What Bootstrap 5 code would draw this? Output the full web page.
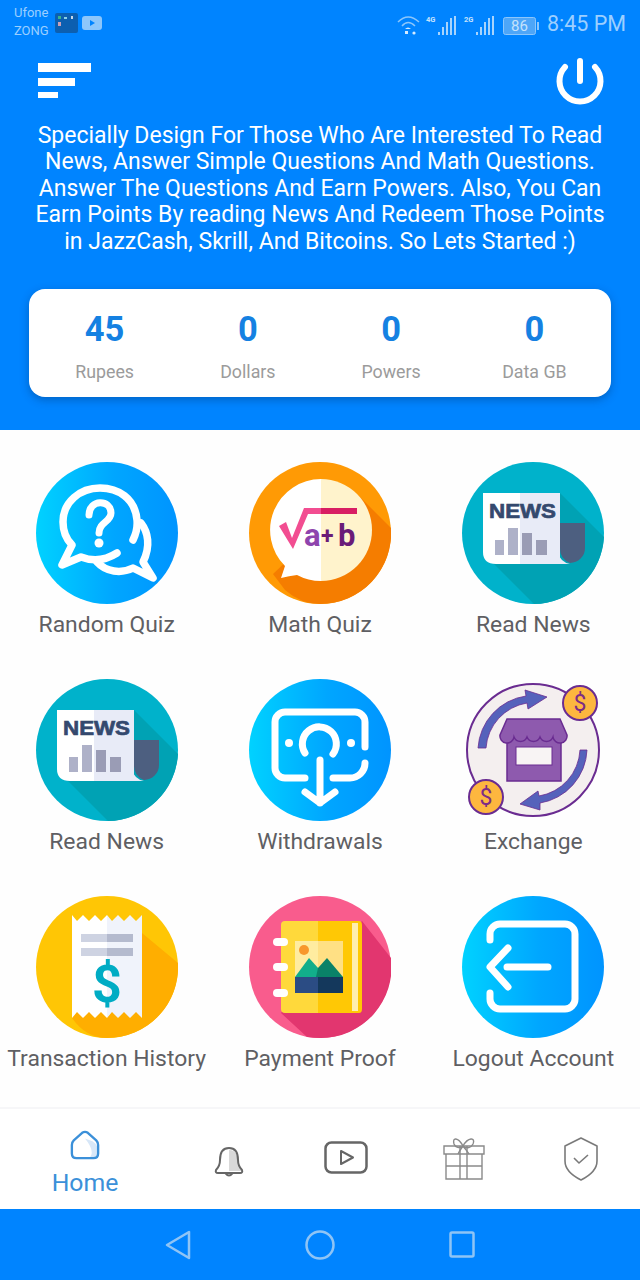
<!DOCTYPE html>
<html>

<head>
  <title>Earning App Home</title>
  <link href="https://cdn.jsdelivr.net/npm/bootstrap@5.3.2/dist/css/bootstrap.min.css" rel="stylesheet">
  <script src="https://cdn.jsdelivr.net/npm/bootstrap@5.3.2/dist/js/bootstrap.bundle.min.js"></script>
  <style>
    body { font-family: Roboto, "Liberation Sans", sans-serif; background: #fefefe; }
    .app-page { width: 640px; height: 1280px; overflow: hidden; }
    .app-head { background: #0084ff; height: 430px; }
    .status-row { height: 44px; padding: 4px 15px 0 14px; color: #9ccfff; }
    .carrier { font-size: 13px; line-height: 18px; width: 41px; }
    .clock { font-size: 21.5px; line-height: 26px; width: 78px; margin-left: 7px; white-space: nowrap; }
    .tool-row { height: 62px; padding: 0 36px 1px 38px; }
    .intro { font-size: 23px; line-height: 26.6px; margin: 16.5px 0 33.5px; color: #fff; }
    .stat-card { margin: 0 29px; height: 108px; background: #fff; border-radius: 16px; box-shadow: 0 3px 8px rgba(0, 40, 90, .35); padding: 0 5px 0 4px; }
    .stat-num { font-size: 34.5px; font-weight: 700; line-height: 40px; color: #1581e2; padding-top: 20px; }
    .stat-name { font-size: 17.8px; line-height: 20px; color: #9b9b9b; margin-top: 13px; }
    .tile-grid { padding-top: 32px; row-gap: 37px; }
    .tile-label { font-size: 22.9px; line-height: 34px; color: #5f5f63; margin-top: 4px; white-space: nowrap; }
    .tab-bar { height: 102px; border-top: 2px solid #f6f6f8; background: #fff; display: grid; grid-template-columns: 170px repeat(4, 117.5px); }
    .home-tab { padding-top: 21px; }
    .bell-icon { margin-top: 13px; }
    .home-label { font-size: 24.8px; line-height: 28px; color: #3b90d9; margin-top: 9px; }
    .nav-keys { height: 71px; background: #0084ff; padding-left: 165px; gap: 114px; }
  </style>
</head>

<body>
  <svg width="0" height="0" class="position-absolute">
    <defs>
      <linearGradient id="skyFill" x1="0" x2="1" y1="0" y2="0">
        <stop offset="0" stop-color="#00d2ff"/>
        <stop offset=".55" stop-color="#00a6ff"/>
        <stop offset="1" stop-color="#0094ff"/>
      </linearGradient>
      <symbol id="newsIcon" viewBox="0 0 142 142">
        <circle cx="71" cy="71" r="71" fill="#00b2cb"/>
        <path d="M98 31 L142 75 A71 71 0 0 1 72 142 L26 96 Z" fill="#00a2b4"/>
        <path d="M21 31 H58 V102 H34 Q21 102 21 90 Z" fill="#fff"/>
        <path d="M58 31 H98 V102 H58 Z" fill="#e8ebf7"/>
        <path d="M98 61 H123 V86 A15 15 0 0 1 108 101 A15 15 0 0 1 98 86 Z" fill="#4d5f80"/>
        <path d="M96 90 Q98 100 108 102 H90 V90 Z" fill="#e8ebf7"/>
        <text x="27" y="56" font-family="Liberation Sans" font-weight="700" font-size="21" textLength="67" lengthAdjust="spacingAndGlyphs" fill="#34496e" stroke="#34496e" stroke-width=".7">NEWS</text>
        <path d="M33 78 H42 V93 H33 Z M46 66 H56 V93 H46 Z" fill="#aeb1c8"/>
        <path d="M60 71 H70 V93 H60 Z M74 78 H85 V93 H74 Z" fill="#9a9cb5"/>
      </symbol>
    </defs>
  </svg>

  <div class="app-page d-flex flex-column">
    <header class="app-head">
      <div class="status-row d-flex align-items-center">
        <div class="carrier align-self-start">Ufone<br>ZONG</div>
        <svg width="50" height="30" viewBox="0 0 50 30" class="align-self-start mt-1">
          <rect x="0" y="5" width="23" height="20" rx="2" fill="#0c5fb0"/>
          <rect x="3" y="8" width="3" height="3" fill="#38b58c"/><rect x="9" y="9" width="3" height="2" fill="#8ad0e8"/><rect x="16" y="8" width="2" height="3" fill="#c6d8ea"/><rect x="3" y="14" width="3" height="4" fill="#c9a0b8"/>
          <rect x="27" y="8" width="20" height="14" rx="3" fill="#8cc6fb"/><path d="M35 12 L40 15 L35 18 Z" fill="#0084ff"/>
        </svg>
        <div class="flex-grow-1"></div>
        <svg width="140" height="22" viewBox="0 0 140 22" class="flex-shrink-0">
          <g fill="none" stroke="#8cc6fb" stroke-width="1.5"><path d="M1 9 Q11 -1 22 9"/><path d="M5 13 Q11 6 18 13"/></g>
          <path d="M8 16 Q11 13 14 16 Z M8 18 h3 v3 h-3 Z" fill="#d5ebff"/><circle cx="17" cy="20" r="1.6" fill="#d5ebff"/>
          <text x="29" y="9" font-size="7.5" font-weight="700" fill="#c6e2fc" font-family="Roboto">4G</text>
          <path d="M41 19h2v3h-2z M45 14h2v8h-2z M49 9h2v13h-2z M53 5h2v17h-2z M57 3h2v19h-2z" fill="#a8d4fc"/>
          <text x="67" y="9" font-size="7.5" font-weight="700" fill="#c6e2fc" font-family="Roboto">2G</text>
          <path d="M79 19h2v3h-2z M83 14h2v8h-2z M87 9h2v13h-2z M91 5h2v17h-2z M95 3h2v19h-2z" fill="#a8d4fc"/>
          <rect x="106.500" y="4.500" width="32" height="17" rx="2" fill="#4ea6f8" stroke="#8cc6fb"/>
          <text x="114" y="18" font-size="15" fill="#c4e2fc" font-family="Roboto">86</text>
        </svg>
        <svg width="3" height="22" viewBox="0 0 3 22" class="flex-shrink-0"><rect x="0" y="9" width="2" height="8" fill="#8cc6fb"/></svg>
        <div class="clock">8:45 PM</div>
      </div>

      <div class="tool-row d-flex justify-content-between align-items-end">
        <svg width="53" height="38" viewBox="0 0 53 38" class="align-self-start mt-3">
          <rect x="0" y="3" width="53" height="9" fill="#fff"/><rect x="0" y="18" width="37" height="8" fill="#fff"/><rect x="0" y="32" width="20" height="7" fill="#fff"/>
        </svg>
        <svg width="48" height="48" viewBox="0 0 48 48">
          <path d="M9 10 A20.500 20.500 0 1 0 39 10" fill="none" stroke="#fff" stroke-width="6" stroke-linecap="round"/>
          <path d="M24 4 V24" stroke="#fff" stroke-width="6" stroke-linecap="round"/>
        </svg>
      </div>

      <p class="intro text-center">Specially Design For Those Who Are Interested To Read<br>News, Answer Simple Questions And Math Questions.<br>Answer The Questions And Earn Powers. Also, You Can<br>Earn Points By reading News And Redeem Those Points<br>in JazzCash, Skrill, And Bitcoins. So Lets Started :)</p>

      <div class="stat-card row g-0 text-center">
        <div class="col-3"><div class="stat-num">45</div><div class="stat-name">Rupees</div></div>
        <div class="col-3"><div class="stat-num">0</div><div class="stat-name">Dollars</div></div>
        <div class="col-3"><div class="stat-num">0</div><div class="stat-name">Powers</div></div>
        <div class="col-3"><div class="stat-num">0</div><div class="stat-name">Data GB</div></div>
      </div>
    </header>

    <main class="flex-grow-1">
      <div class="tile-grid row g-0 text-center">
        <div class="col-4">
          <svg width="142" height="142" viewBox="0 0 142 142" class="d-block mx-auto">
            <circle cx="71" cy="71" r="71" fill="url(#skyFill)"/>
            <g fill="none" stroke="#fff" stroke-width="7.500" stroke-linecap="round" stroke-linejoin="round">
              <path d="M97 78 Q102 68 101 58 C99 36 82 26 64 26 C44 26 27 40 27 60 C27 70 31 78 36 83 L26 103 L45 95 C58 100 70 98 81 91"/>
              <path d="M105 61 C112 70 115 84 107 100 L117 116 L97 106 C85 112 70 110 61 100"/>
              <path d="M53 53 C53 37 75 37 75 51 C75 60 63 60 63 71" stroke-width="7"/>
            </g>
            <circle cx="63" cy="81" r="4.500" fill="#fff"/>
          </svg>
          <div class="tile-label">Random Quiz</div>
        </div>
        <div class="col-4">
          <svg width="142" height="142" viewBox="0 0 142 142" class="d-block mx-auto">
            <circle cx="71" cy="71" r="71" fill="#ff9a05"/>
            <path d="M108 32 L142 66 A71 71 0 0 1 71 142 Q52 142 36 128 L24 112 Z" fill="#f57d00"/>
            <path d="M72 17 A51 51 0 0 0 36 104 L32 116 Q40 114 48 113 A51 51 0 0 0 72 119 Z" fill="#fff"/>
            <path d="M72 17 A51 51 0 0 1 72 119 Z" fill="#fff3cc"/>
            <path d="M30 64 L37 60 L43 76 L55 46 H72 V52 H59 L44 87 Z" fill="#f24d91"/>
            <rect x="72" y="46" width="36" height="6" fill="#d81e63"/>
            <text x="55" y="84" font-family="Roboto" font-weight="700" font-size="31" fill="#8e44ad">a</text>
            <text x="72" y="82" font-family="Roboto" font-weight="700" font-size="23" fill="#6a1b78">+</text>
            <text x="89" y="84" font-family="Roboto" font-weight="700" font-size="31" fill="#6a1b78">b</text>
          </svg>
          <div class="tile-label">Math Quiz</div>
        </div>
        <div class="col-4">
          <svg width="142" height="142" class="d-block mx-auto"><use href="#newsIcon"/></svg>
          <div class="tile-label">Read News</div>
        </div>

        <div class="col-4">
          <svg width="142" height="142" class="d-block mx-auto"><use href="#newsIcon"/></svg>
          <div class="tile-label">Read News</div>
        </div>
        <div class="col-4">
          <svg width="142" height="142" viewBox="0 0 142 142" class="d-block mx-auto">
            <circle cx="71" cy="71" r="71" fill="url(#skyFill)"/>
            <g fill="none" stroke="#fff" stroke-width="7" stroke-linecap="round" stroke-linejoin="round">
              <path d="M116 68 V43 A10 10 0 0 0 106 33 H36 A10 10 0 0 0 26 43 V89 A10 10 0 0 0 36 99 H56"/>
              <path d="M116 84 A15 15 0 0 1 101 99 H84"/>
              <path d="M56 74 A17 17 0 1 1 84 75"/>
              <path d="M71 81 V124 M56 113 L71 124 L86 113"/>
            </g>
            <circle cx="40" cy="64" r="4" fill="#fff"/><circle cx="102" cy="64" r="4" fill="#fff"/>
          </svg>
          <div class="tile-label">Withdrawals</div>
        </div>
        <div class="col-4">
          <svg width="142" height="142" viewBox="0 0 142 142" class="d-block mx-auto">
            <circle cx="71" cy="71" r="66" fill="#f4efef" stroke="#6a2c91" stroke-width="2"/>
            <path d="M16 69 A56 56 0 0 1 64 17 L63 11 L85 18 L66 30 L65 24 A49 49 0 0 0 24 69 Z" fill="#5562bb" stroke="#6a2c91" stroke-width=".8"/>
            <path d="M125 71 A56 56 0 0 1 78 124 L78 131 L58 125 L76 112 L77 117 A49 49 0 0 0 118 71 Z" fill="#5562bb" stroke="#6a2c91" stroke-width=".8"/>
            <path d="M45 57 H99 V102 H45 Z" fill="#8e5aae" stroke="#6a2c91" stroke-width="1.500"/>
            <rect x="54" y="68" width="36" height="18" fill="#f8f4f4" stroke="#6a2c91"/>
            <path d="M45 40 H98 L105 56 A7 7 0 0 1 91 58 A7 7 0 0 1 78 58 A7 7 0 0 1 65 58 A7 7 0 0 1 52 58 A7 7 0 0 1 38 56 Z" fill="#8e5aae" stroke="#6a2c91" stroke-width="1.500"/>
            <circle cx="118" cy="24" r="17" fill="#fdb73f" stroke="#6a2c91" stroke-width="2"/>
            <text x="118" y="32" text-anchor="middle" font-family="Roboto" font-size="23" fill="#7d2c86">$</text>
            <circle cx="24" cy="118" r="17" fill="#fdb73f" stroke="#6a2c91" stroke-width="2"/>
            <text x="24" y="126" text-anchor="middle" font-family="Roboto" font-size="23" fill="#7d2c86">$</text>
          </svg>
          <div class="tile-label">Exchange</div>
        </div>

        <div class="col-4">
          <svg width="142" height="142" viewBox="0 0 142 142" class="d-block mx-auto">
            <circle cx="71" cy="71" r="71" fill="#ffc605"/>
            <path d="M106 37 L142 67 A71 71 0 0 1 71 142 Q50 142 36 122 Z" fill="#ffae00"/>
            <path d="M36 19 L41 25 L47 19 L53 25 L59 19 L65 25 L71 19 V122 L65 116 L59 122 L53 116 L47 122 L41 116 L36 122 Z" fill="#fff"/>
            <path d="M71 19 L76 25 L82 19 L88 25 L94 19 L100 25 L106 19 V122 L100 116 L94 122 L88 116 L82 122 L76 116 L71 122 Z" fill="#f0f3fb"/>
            <path d="M45 38 H71 V46 H45 Z M45 52 H71 V60 H45 Z" fill="#ced3e2"/>
            <path d="M71 38 H97 V46 H71 Z M71 52 H97 V60 H71 Z" fill="#b4bace"/>
            <text x="71" y="106" text-anchor="middle" font-family="Roboto" font-weight="700" font-size="52" fill="#00acc4">$</text>
          </svg>
          <div class="tile-label">Transaction History</div>
        </div>
        <div class="col-4">
          <svg width="142" height="142" viewBox="0 0 142 142" class="d-block mx-auto">
            <circle cx="71" cy="71" r="71" fill="#f95c8d"/>
            <path d="M113 25 L142 62 A71 71 0 0 1 71 142 Q66 142 58 141 L32 117 Z" fill="#e2366f"/>
            <path d="M36 25 H69 V117 H36 Q32 117 32 113 V29 Q32 25 36 25 Z" fill="#ffd93b"/>
            <path d="M69 25 H110 Q113 25 113 29 V113 Q113 117 110 117 H69 Z" fill="#ffc805"/>
            <rect x="103" y="27" width="6" height="88" fill="#ffeeb0"/>
            <rect x="24" y="42" width="15" height="8" rx="4" fill="#fff"/><rect x="24" y="67" width="15" height="8" rx="4" fill="#fff"/><rect x="24" y="93" width="15" height="8" rx="4" fill="#fff"/>
            <path d="M46 45 H69 V97 H46 Z" fill="#ffeca0"/><path d="M69 45 H94 V97 H69 Z" fill="#ffe084"/>
            <circle cx="55" cy="54" r="5" fill="#f8982c"/>
            <path d="M46 81 L60 62 L70 73 L69 81 Z" fill="#12ae8b"/>
            <path d="M67 81 L69 72 L78 62 L94 81 Z" fill="#0a8268"/>
            <path d="M46 81 H69 V97 H46 Z" fill="#2b4c84"/><path d="M69 81 H94 V97 H69 Z" fill="#14385c"/>
          </svg>
          <div class="tile-label">Payment Proof</div>
        </div>
        <div class="col-4">
          <svg width="142" height="142" viewBox="0 0 142 142" class="d-block mx-auto">
            <circle cx="71" cy="71" r="71" fill="url(#skyFill)"/>
            <g fill="none" stroke="#fff" stroke-width="7" stroke-linecap="round" stroke-linejoin="round">
              <path d="M28 44 V38 A10 10 0 0 1 38 28 H103 A10 10 0 0 1 113 38 V103 A10 10 0 0 1 103 113 H38 A10 10 0 0 1 28 103 V97"/>
              <path d="M45 71 H86 M46 52 L28 71 L46 91"/>
            </g>
          </svg>
          <div class="tile-label">Logout Account</div>
        </div>
      </div>
    </main>

    <nav class="tab-bar">
      <div class="home-tab d-flex flex-column align-items-center">
        <svg width="32" height="30" viewBox="0 0 32 32">
          <path d="M16 9 L24 12 Q30 16 30 22 L30 25 Q30 30 25 30 L20 30 Q28 24 16 9 Z" fill="#d7e7f8"/>
          <path d="M13 3 Q16 1 19 3 L28 11 Q30 13 30 16 V25 Q30 30 25 30 H7 Q2 30 2 25 V16 Q2 13 4 11 Z" fill="none" stroke="#3b90d9" stroke-width="2.500" stroke-linejoin="round"/>
        </svg>
        <div class="home-label">Home</div>
      </div>
      <div class="d-flex justify-content-center pt-4">
        <svg width="30" height="32" viewBox="0 0 30 32" class="bell-icon">
          <path d="M15 4 C22 4 24 10 24 15 C24 20 26 23 28 25 H15 Z" fill="#d9d9d9"/>
          <path d="M15 2 C8 2 6 8 6 14 C6 19 4 22 2 24 Q1 27 4 27 H26 Q29 27 28 24 C26 22 24 19 24 14 C24 8 22 2 15 2 Z M11 27 Q15 32 19 27" fill="none" stroke="#666" stroke-width="2" stroke-linejoin="round"/>
        </svg>
      </div>
      <div class="d-flex justify-content-center pt-4">
        <svg width="44" height="33" viewBox="0 0 44 33" class="mt-2">
          <rect x="1.500" y="1.500" width="41" height="30" rx="6" fill="none" stroke="#666" stroke-width="2.500"/>
          <path d="M17 10 L29 16.500 L17 23 Z" fill="none" stroke="#666" stroke-width="2" stroke-linejoin="round"/>
        </svg>
      </div>
      <div class="d-flex justify-content-center pt-4">
        <svg width="44" height="44" viewBox="0 0 44 44" class="mt-1" fill="none" stroke="#8a8a8a" stroke-width="1.400">
          <path d="M2 9 H42 V17 H2 Z M4 17 H40 V42 H4 Z M18 9 V42 M25 9 V42 M4 29 H40"/>
          <path d="M21 9 C16 0 10 0 12 7 C13 10 18 12 21 9 C26 0 34 0 31 7 C29 11 25 12 21 9 C18 13 17 15 16 17 M21 9 C24 13 26 15 27 17"/>
        </svg>
      </div>
      <div class="d-flex justify-content-center pt-4">
        <svg width="36" height="44" viewBox="0 0 36 44" class="mt-1" fill="none" stroke="#7a7a7a" stroke-width="1.600" stroke-linejoin="round">
          <path d="M18 1 L34 9 V24 C34 33 26 39 18 43 C10 39 2 33 2 24 V9 Z"/>
          <path d="M11 21 L16 26 L25 18"/>
        </svg>
      </div>
    </nav>

    <div class="nav-keys d-flex align-items-center flex-shrink-0">
      <svg width="26" height="30" viewBox="0 0 26 30" fill="none" stroke="#8fc4f5" stroke-width="2.500" stroke-linejoin="round"><path d="M24 2 V28 L2 15 Z"/></svg>
      <svg width="30" height="30" viewBox="0 0 30 30" fill="none" stroke="#8fc4f5" stroke-width="2.500"><circle cx="15" cy="15" r="13.500"/></svg>
      <svg width="26" height="27" viewBox="0 0 26 27" fill="none" stroke="#8fc4f5" stroke-width="2.500"><rect x="1.500" y="1.500" width="23" height="24" rx="1.500"/></svg>
    </div>
  </div>
</body>

</html>
